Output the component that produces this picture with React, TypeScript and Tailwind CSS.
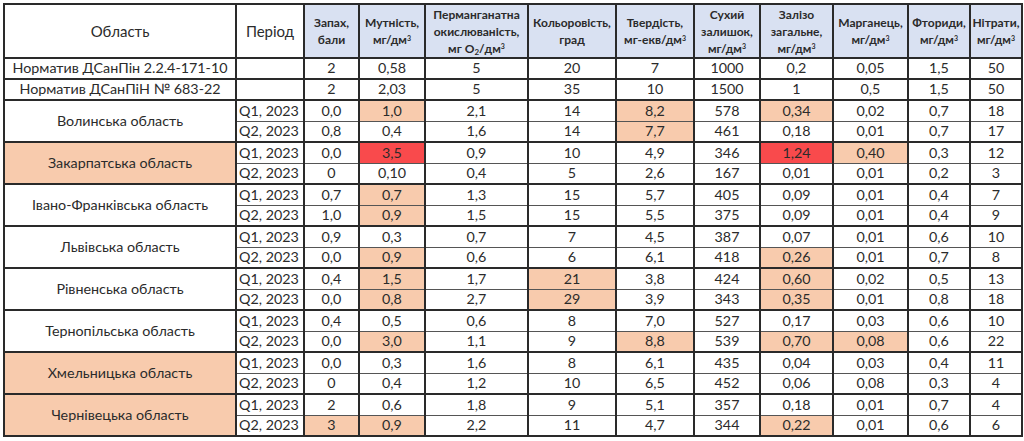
import React from "react";

const widths = [232, 68, 55, 66, 103, 88, 78, 66, 73, 75, 62, 52];

const S = () => <sup className="text-[7px]">3</sup>;

const headers: React.ReactNode[] = [
  <>Запах,<br />бали</>,
  <>Мутність,<br />мг/дм<S /></>,
  <>Перманганатна<br />окислюваність,<br />мг O<sub className="text-[8px]">2</sub>/дм<S /></>,
  <>Кольоровість,<br />град</>,
  <>Твердість,<br />мг-екв/дм<S /></>,
  <>Сухий<br />залишок,<br />мг/дм<S /></>,
  <>Залізо<br />загальне,<br />мг/дм<S /></>,
  <>Марганець,<br />мг/дм<S /></>,
  <>Фториди,<br />мг/дм<S /></>,
  <>Нітрати,<br />мг/дм<S /></>,
];

type Region = { name: string; peach?: boolean; rows: [string, string[]][] };

const norms: [string, string[]][] = [
  ["Норматив ДСанПін 2.2.4-171-10", ["2", "0,58", "5", "20", "7", "1000", "0,2", "0,05", "1,5", "50"]],
  ["Норматив ДСанПіН № 683-22", ["2", "2,03", "5", "35", "10", "1500", "1", "0,5", "1,5", "50"]],
];

const regions: Region[] = [
  {
    name: "Волинська область",
    rows: [
      ["Q1, 2023", ["0,0", "p1,0", "2,1", "14", "p8,2", "578", "p0,34", "0,02", "0,7", "18"]],
      ["Q2, 2023", ["0,8", "0,4", "1,6", "14", "p7,7", "461", "0,18", "0,01", "0,7", "17"]],
    ],
  },
  {
    name: "Закарпатська область",
    peach: true,
    rows: [
      ["Q1, 2023", ["0,0", "r3,5", "0,9", "10", "4,9", "346", "r1,24", "p0,40", "0,3", "12"]],
      ["Q2, 2023", ["0", "0,10", "0,4", "5", "2,6", "167", "0,01", "0,01", "0,2", "3"]],
    ],
  },
  {
    name: "Івано-Франківська область",
    rows: [
      ["Q1, 2023", ["0,7", "p0,7", "1,3", "15", "5,7", "405", "0,09", "0,01", "0,4", "7"]],
      ["Q2, 2023", ["1,0", "p0,9", "1,5", "15", "5,5", "375", "0,09", "0,01", "0,4", "9"]],
    ],
  },
  {
    name: "Львівська область",
    rows: [
      ["Q1, 2023", ["0,9", "0,3", "0,7", "7", "4,5", "387", "0,07", "0,01", "0,6", "10"]],
      ["Q2, 2023", ["0,0", "p0,9", "0,6", "6", "6,1", "418", "p0,26", "0,01", "0,7", "8"]],
    ],
  },
  {
    name: "Рівненська область",
    rows: [
      ["Q1, 2023", ["0,4", "p1,5", "1,7", "p21", "3,8", "424", "p0,60", "0,02", "0,5", "13"]],
      ["Q2, 2023", ["0,0", "p0,8", "2,7", "p29", "3,9", "343", "p0,35", "0,01", "0,8", "18"]],
    ],
  },
  {
    name: "Тернопільська область",
    rows: [
      ["Q1, 2023", ["0,4", "0,5", "0,6", "8", "7,0", "527", "0,17", "0,03", "0,6", "10"]],
      ["Q2, 2023", ["0,0", "p3,0", "1,1", "9", "p8,8", "539", "p0,70", "p0,08", "0,6", "22"]],
    ],
  },
  {
    name: "Хмельницька область",
    peach: true,
    rows: [
      ["Q1, 2023", ["0,0", "0,3", "1,6", "8", "6,1", "435", "0,04", "0,03", "0,4", "11"]],
      ["Q2, 2023", ["0", "0,4", "1,2", "10", "6,5", "452", "0,06", "0,08", "0,3", "4"]],
    ],
  },
  {
    name: "Чернівецька область",
    peach: true,
    rows: [
      ["Q1, 2023", ["2", "0,6", "1,8", "9", "5,1", "357", "0,18", "0,01", "0,7", "4"]],
      ["Q2, 2023", ["p3", "p0,9", "2,2", "11", "4,7", "344", "p0,22", "0,01", "0,6", "6"]],
    ],
  },
];

const base = "border-x-2 border-x-[#2a2a2a] px-1 py-0 leading-none text-center";

function Val({ v, top }: { v: string; top: string }) {
  let bg = "bg-white";
  let t = v;
  if (v.startsWith("p")) {
    bg = "bg-[#f8cbad]";
    t = v.slice(1);
  } else if (v.startsWith("r")) {
    bg = "bg-[#f94a4c]";
    t = v.slice(1);
  }
  return <td className={`${base} ${top} ${bg}`}>{t}</td>;
}

export default function App() {
  return (
    <div className="w-[1024px] h-[441px] bg-white pt-[3px] pl-[3px]">
      <table
        className="table-fixed border-collapse border-2 border-[#2a2a2a] text-[#2b2b2b] text-[14.3px]"
        style={{ width: 1018, fontFamily: "Lato, 'Open Sans', sans-serif" }}
      >
        <colgroup>
          {widths.map((w, i) => (
            <col key={i} style={{ width: w }} />
          ))}
        </colgroup>
        <thead>
          <tr className="h-[54px]">
            <th className={`${base} border-y-2 border-y-[#2a2a2a] font-normal bg-white text-[15px]`}>Область</th>
            <th className={`${base} border-y-2 border-y-[#2a2a2a] font-normal bg-white text-[15px]`}>Період</th>
            {headers.map((h, i) => (
              <th
                key={i}
                className="border-x-2 border-x-[#2a2a2a] border-y-2 border-y-[#2a2a2a] px-0 py-0 text-center bg-[#d9e1f2] font-bold text-[12px] leading-[17px] whitespace-nowrap"
              >
                {h}
              </th>
            ))}
          </tr>
        </thead>
        <tbody>
          {norms.map(([name, vals], i) => (
            <tr key={i} className="h-[21px]">
              <td className={`${base} border-y-2 border-y-[#2a2a2a] bg-white`}>{name}</td>
              <td className={`${base} border-y-2 border-y-[#2a2a2a] bg-white`}></td>
              {vals.map((v, j) => (
                <Val key={j} v={v} top="border-y-2 border-y-[#2a2a2a]" />
              ))}
            </tr>
          ))}
          {regions.map((r, ri) =>
            r.rows.map(([period, vals], k) => {
              const top =
                k === 0
                  ? "border-t-2 border-t-[#2a2a2a] border-b border-b-[#555]"
                  : "border-t border-t-[#555] border-b-2 border-b-[#2a2a2a]";
              return (
                <tr key={`${ri}-${k}`} className="h-[21px]">
                  {k === 0 && (
                    <td
                      rowSpan={2}
                      className={`${base} border-y-2 border-y-[#2a2a2a] ${r.peach ? "bg-[#f8cbad]" : "bg-white"}`}
                    >
                      {r.name}
                    </td>
                  )}
                  <td className={`border-x-2 border-x-[#2a2a2a] px-[2px] py-0 leading-none text-left bg-white ${top}`}>
                    {period}
                  </td>
                  {vals.map((v, j) => (
                    <Val key={j} v={v} top={top} />
                  ))}
                </tr>
              );
            })
          )}
        </tbody>
      </table>
    </div>
  );
}
